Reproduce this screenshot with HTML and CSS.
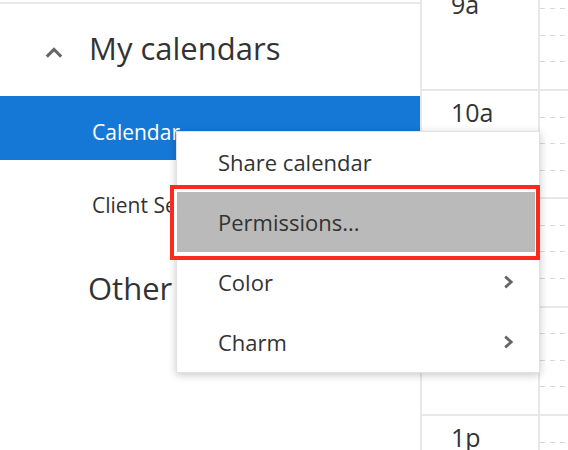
FILE: index.html
```html
<!DOCTYPE html>
<html lang="en">
<head>
<meta charset="utf-8">
<title>Calendar</title>
<link rel="stylesheet" href="styles.css">
</head>
<body>
<div class="app">
  <aside class="sidebar">
    <div class="topline"></div>
    <div class="group-head">
      <svg class="chev-up" width="18" height="11" viewBox="0 0 18 11"><polyline points="1.8,9.6 9,2.4 16.2,9.6" fill="none" stroke="#666" stroke-width="3"/></svg>
      <span class="group-title">My calendars</span>
    </div>
    <div class="cal-item selected"><span>Calendar</span></div>
    <div class="cal-item client"><span>Client Services</span></div>
    <div class="group-head other">
      <span class="group-title">Other calendars</span>
    </div>
  </aside>
  <div class="times">
    <div class="hour"><span class="label">9a</span></div>
    <div class="hour"><span class="label">10a</span></div>
    <div class="hour"><span class="label">11a</span></div>
    <div class="hour"><span class="label">12p</span></div>
    <div class="hour"><span class="label">1p</span></div>
  </div>
  <div class="grid">
    <div class="ghour"><div class="slot"></div><div class="slot"></div><div class="slot"></div><div class="slot last"></div></div>
    <div class="ghour"><div class="slot"></div><div class="slot"></div><div class="slot"></div><div class="slot last"></div></div>
    <div class="ghour"><div class="slot"></div><div class="slot"></div><div class="slot"></div><div class="slot last"></div></div>
    <div class="ghour"><div class="slot"></div><div class="slot"></div><div class="slot"></div><div class="slot last"></div></div>
    <div class="ghour"><div class="slot"></div><div class="slot"></div><div class="slot"></div><div class="slot last"></div></div>
  </div>
</div>

<div class="menu">
  <div class="menu-item">Share calendar</div>
  <div class="menu-item active">Permissions...</div>
  <div class="menu-item"><span>Color</span>
    <svg class="chev-right" width="11" height="14" viewBox="0 0 11 14"><polyline points="2.2,1.6 8.2,7 2.2,12.4" fill="none" stroke="#666" stroke-width="2.8"/></svg>
  </div>
  <div class="menu-item"><span>Charm</span>
    <svg class="chev-right" width="11" height="14" viewBox="0 0 11 14"><polyline points="2.2,1.6 8.2,7 2.2,12.4" fill="none" stroke="#666" stroke-width="2.8"/></svg>
  </div>
</div>
<div class="annot"></div>
</body>
</html>
```

FILE: styles.css
```css
html, body {
  margin: 0;
  padding: 0;
}
body {
  width: 568px;
  height: 450px;
  overflow: hidden;
  background: #fff;
  font-family: "Open Sans", "Noto Sans", sans-serif;
  color: #333;
  position: relative;
}
.app {
  display: flex;
  height: 450px;
  overflow: hidden;
}
.sidebar {
  width: 420px;
  flex: none;
  border-right: 2px solid #e8e8e8;
  overflow: hidden;
}
.topline {
  margin-top: 2px;
  height: 2px;
  background: #e8e8e8;
}
.group-head {
  height: 92px;
  display: flex;
  align-items: center;
  padding-left: 45px;
}
.chev-up {
  display: block;
  margin-top: 4px;
  margin-right: 26px;
}
.group-title {
  font-size: 31px;
  line-height: 42px;
  margin-bottom: 5px;
  white-space: nowrap;
}
.group-head.other {
  margin-top: 11px;
  padding-left: 88px;
}
.cal-item {
  height: 64px;
  box-sizing: border-box;
  padding-top: 7px;
  padding-left: 92px;
  display: flex;
  align-items: center;
  font-size: 21px;
  line-height: 28px;
  white-space: nowrap;
}
.cal-item.selected {
  background: #1678d6;
  color: #fff;
}
.cal-item.client {
  margin-top: 9px;
}
.times {
  width: 116px;
  flex: none;
  border-right: 2px solid #e8e8e8;
  margin-top: -17.33px;
}
.hour {
  height: 108.33px;
  box-sizing: border-box;
  border-bottom: 2px solid #e8e8e8;
  padding-top: 4px;
  padding-left: 29px;
}
.label {
  display: block;
  font-size: 25px;
  line-height: 34px;
}
.grid {
  flex: 1;
  margin-top: -17.33px;
}
.ghour {
  height: 108.33px;
  box-sizing: border-box;
  border-bottom: 2px solid #e8e8e8;
  display: flex;
  flex-direction: column;
}
.slot {
  flex: 1;
  background: linear-gradient(to right, #d8d8d8 50%, transparent 50%) left bottom / 10px 1px repeat-x;
}
.slot.last {
  background: none;
}
.menu {
  position: absolute;
  left: 176px;
  top: 131px;
  width: 364px;
  box-sizing: border-box;
  background: #fff;
  border: 1px solid #e2e2e2;
  box-shadow: 0 2px 8px rgba(0, 0, 0, 0.22);
}
.menu-item {
  height: 60px;
  display: flex;
  align-items: center;
  justify-content: space-between;
  padding-left: 41px;
  padding-right: 25px;
  font-size: 22px;
  line-height: 30px;
  color: #333;
}
.menu-item.active {
  background: #bababa;
}
.chev-right {
  display: block;
}
.annot {
  position: absolute;
  left: 170px;
  top: 185px;
  width: 370px;
  height: 75px;
  box-sizing: border-box;
  border: 4px solid #fa2a1e;
  box-shadow: inset 3px 0 0 #fff, inset 0 3px 0 #fff, inset 0 -3px 0 #fff, inset -1px 0 0 #fff;
}
```
